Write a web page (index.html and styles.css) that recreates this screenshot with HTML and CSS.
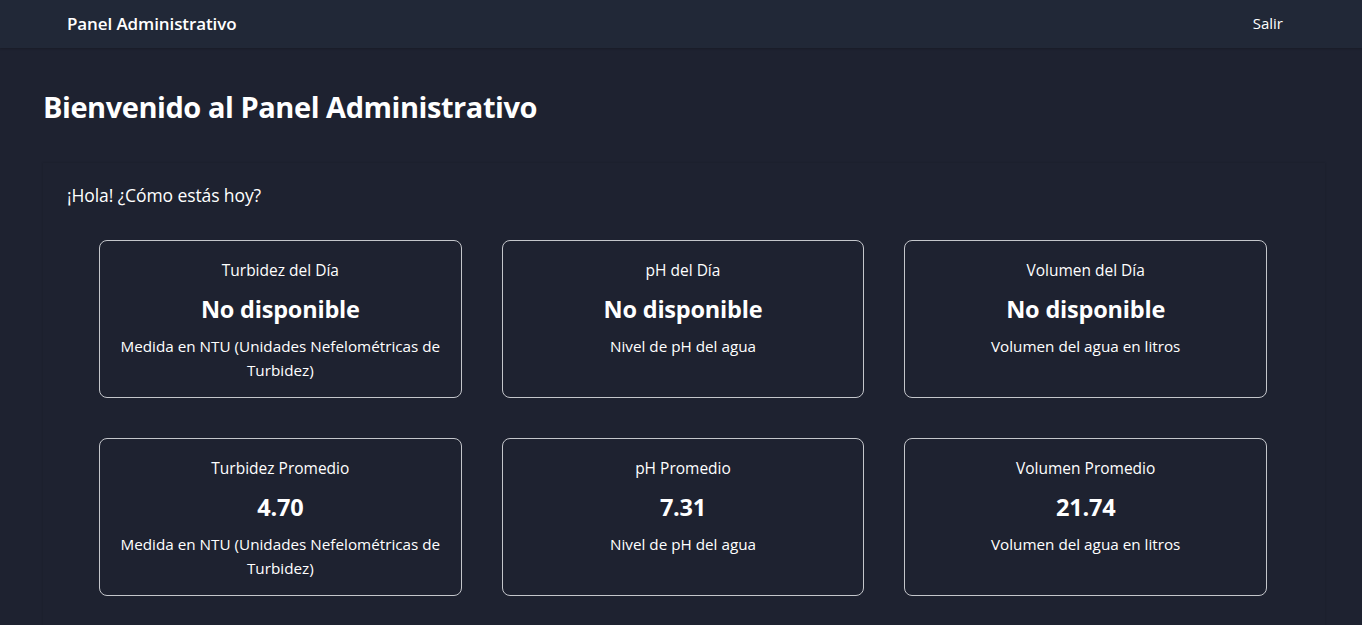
FILE: index.html
```html
<!DOCTYPE html>
<html lang="es">
<head>
<meta charset="utf-8">
<title>Panel Administrativo</title>
<link rel="stylesheet" href="styles.css">
</head>
<body>
  <nav class="navbar">
    <span class="brand">Panel Administrativo</span>
    <a class="logout" href="#">Salir</a>
  </nav>
  <main class="main">
    <h1 class="page-title">Bienvenido al Panel Administrativo</h1>
    <section class="panel">
      <p class="greeting">¡Hola! ¿Cómo estás hoy?</p>
      <div class="cards">
        <div class="card">
          <h3 class="card-title">Turbidez del Día</h3>
          <p class="card-value">No disponible</p>
          <p class="card-desc">Medida en NTU (Unidades Nefelométricas de Turbidez)</p>
        </div>
        <div class="card">
          <h3 class="card-title">pH del Día</h3>
          <p class="card-value">No disponible</p>
          <p class="card-desc">Nivel de pH del agua</p>
        </div>
        <div class="card">
          <h3 class="card-title">Volumen del Día</h3>
          <p class="card-value">No disponible</p>
          <p class="card-desc">Volumen del agua en litros</p>
        </div>
        <div class="card">
          <h3 class="card-title">Turbidez Promedio</h3>
          <p class="card-value">4.70</p>
          <p class="card-desc">Medida en NTU (Unidades Nefelométricas de Turbidez)</p>
        </div>
        <div class="card">
          <h3 class="card-title">pH Promedio</h3>
          <p class="card-value">7.31</p>
          <p class="card-desc">Nivel de pH del agua</p>
        </div>
        <div class="card">
          <h3 class="card-title">Volumen Promedio</h3>
          <p class="card-value">21.74</p>
          <p class="card-desc">Volumen del agua en litros</p>
        </div>
      </div>
    </section>
  </main>
</body>
</html>
```

FILE: styles.css
```css
html, body {
  margin: 0;
  padding: 0;
}
html {
  overflow: hidden;
}
body {
  background: #1e2230;
  color: #ffffff;
  font-family: "Open Sans", "Noto Sans", sans-serif;
}
.navbar {
  height: 48px;
  background: #212837;
  display: flex;
  align-items: center;
  justify-content: space-between;
  padding: 0 79px 0 67px;
  box-shadow: 0 1px 2px rgba(0,0,0,0.2);
}
.brand {
  font-size: 17px;
  font-weight: 600;
  letter-spacing: -0.1px;
  margin-top: -2px;
}
.logout {
  color: #ffffff;
  text-decoration: none;
  font-size: 15px;
  margin-top: -2px;
}
.main {
  padding: 41px 0 0 43px;
}
.page-title {
  margin: 0;
  font-size: 29px;
  line-height: 36px;
  font-weight: 700;
  letter-spacing: -0.45px;
}
.panel {
  margin-top: 38px;
  width: 1282px;
  box-sizing: border-box;
  padding: 20px 24px 40px;
  background: #1e2230;
  box-shadow: 0 0 2px rgba(0,0,0,0.18);
}
.greeting {
  margin: 0;
  font-size: 17.5px;
  line-height: 24px;
  letter-spacing: -0.1px;
}
.cards {
  margin: 33px 0 0 32px;
  width: 1168px;
  display: grid;
  grid-template-columns: repeat(3, 1fr);
  gap: 40px;
}
.card {
  border: 1px solid #c4c6cb;
  border-radius: 8px;
  padding: 17px 16px 15px;
  text-align: center;
}
.card-title {
  margin: 0;
  font-size: 15.5px;
  line-height: 24px;
  font-weight: 400;
}
.card-value {
  margin: 11px 0 9px;
  font-size: 23.5px;
  line-height: 32px;
  font-weight: 700;
  letter-spacing: -0.2px;
}
.card-desc {
  margin: 0;
  font-size: 15.25px;
  line-height: 24px;
}
```
